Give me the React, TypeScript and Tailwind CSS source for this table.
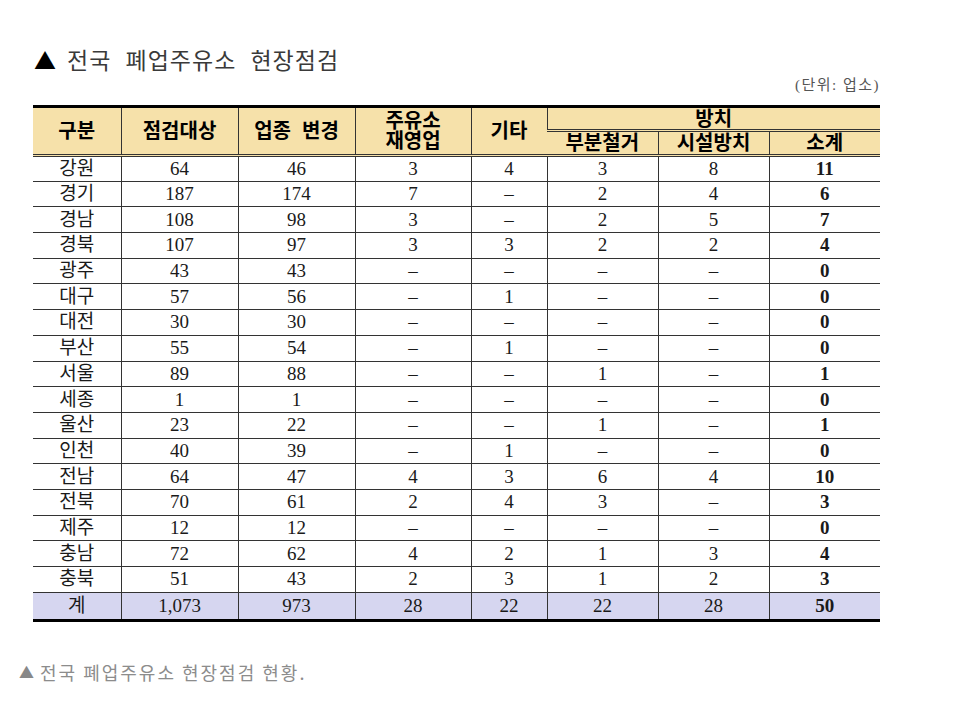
const rows: string[][] = [
  ["강원", "64", "46", "3", "4", "3", "8", "11"],
  ["경기", "187", "174", "7", "–", "2", "4", "6"],
  ["경남", "108", "98", "3", "–", "2", "5", "7"],
  ["경북", "107", "97", "3", "3", "2", "2", "4"],
  ["광주", "43", "43", "–", "–", "–", "–", "0"],
  ["대구", "57", "56", "–", "1", "–", "–", "0"],
  ["대전", "30", "30", "–", "–", "–", "–", "0"],
  ["부산", "55", "54", "–", "1", "–", "–", "0"],
  ["서울", "89", "88", "–", "–", "1", "–", "1"],
  ["세종", "1", "1", "–", "–", "–", "–", "0"],
  ["울산", "23", "22", "–", "–", "1", "–", "1"],
  ["인천", "40", "39", "–", "1", "–", "–", "0"],
  ["전남", "64", "47", "4", "3", "6", "4", "10"],
  ["전북", "70", "61", "2", "4", "3", "–", "3"],
  ["제주", "12", "12", "–", "–", "–", "–", "0"],
  ["충남", "72", "62", "4", "2", "1", "3", "4"],
  ["충북", "51", "43", "2", "3", "1", "2", "3"],
];

const total = ["계", "1,073", "973", "28", "22", "22", "28", "50"];

const widths = [88, 117, 117, 116, 76, 111, 111, 111];

const th = "bg-[#f6e1aa] font-bold text-[20px] leading-[20px] text-black border-l border-[#333] first:border-l-0 align-middle";

export default function App() {
  return (
    <div className="w-[959px] h-[707px] bg-white text-[#1a1a1a] font-['Liberation_Serif','Noto_Sans_CJK_KR',serif]">
      {/* title */}
      <div className="pt-[45px] pl-[34px] flex items-center h-[73px]">
        <span className="text-[22px] leading-[28px] text-black font-['Noto_Sans_CJK_KR',sans-serif]">▲</span>
        <span className="ml-[11px] text-[23px] leading-[28px] text-[#3a3a3a] tracking-[1px] [word-spacing:8px] font-['Noto_Sans_CJK_KR',sans-serif]">
          전국 폐업주유소 현장점검
        </span>
      </div>

      <div className="w-[880px] mt-[3px] text-right text-[15px] leading-[18px] text-[#555] tracking-[1.5px]">
        (단위: 업소)
      </div>

      {/* table */}
      <div className="pl-[33px] mt-[11px]">
        <table className="border-collapse table-fixed w-[847px] text-center">
          <colgroup>
            {widths.map((w, i) => (
              <col key={i} style={{ width: w }} />
            ))}
          </colgroup>
          <thead>
            <tr className="border-t-[3px] border-black h-[24px]">
              <th rowSpan={2} className={th + " border-b-[3px] border-b-[#333] border-double"}>구분</th>
              <th rowSpan={2} className={th + " border-b-[3px] border-b-[#333] border-double"}>점검대상</th>
              <th rowSpan={2} className={th + " border-b-[3px] border-b-[#333] border-double [word-spacing:6px]"}>업종 변경</th>
              <th rowSpan={2} className={th + " border-b-[3px] border-b-[#333] border-double leading-[18px]"}>
                주유소
                <br />
                재영업
              </th>
              <th rowSpan={2} className={th + " border-b-[3px] border-b-[#333] border-double"}>기타</th>
              <th colSpan={3} className={th + " border-b-[3px] border-b-[#333] border-double"}>방치</th>
            </tr>
            <tr className="h-[25px] border-b-[3px] border-double border-[#333]">
              <th className={th + " border-l"}>부분철거</th>
              <th className={th}>시설방치</th>
              <th className={th}>소계</th>
            </tr>
          </thead>
          <tbody>
            {rows.map((r) => (
              <tr key={r[0]} className="h-[25.7px] border-b border-[#333]">
                {r.map((c, i) => (
                  <td
                    key={i}
                    className={
                      "p-0 text-[19px] leading-[20px] align-middle " +
                      (i > 0 ? "border-l border-[#333] " : "") +
                      (i === 7 ? "font-bold" : "")
                    }
                  >
                    {c}
                  </td>
                ))}
              </tr>
            ))}
            <tr className="h-[28px] bg-[#d6d6f0] border-b-[3px] border-black">
              {total.map((c, i) => (
                <td
                  key={i}
                  className={
                    "p-0 text-[19px] leading-[20px] align-middle " +
                    (i > 0 ? "border-l border-[#333] " : "") +
                    (i === 7 ? "font-bold" : "")
                  }
                >
                  {c}
                </td>
              ))}
            </tr>
          </tbody>
        </table>
      </div>

      {/* caption */}
      <div className="pl-[19px] mt-[39px] flex items-center text-[#8c8c8c] font-['Noto_Sans_CJK_KR',sans-serif]">
        <span className="text-[15px] leading-[22px] text-[#888]">▲</span>
        <span className="ml-[6px] text-[18px] leading-[22px] tracking-[2px]">전국 폐업주유소 현장점검 현황.</span>
      </div>
    </div>
  );
}
